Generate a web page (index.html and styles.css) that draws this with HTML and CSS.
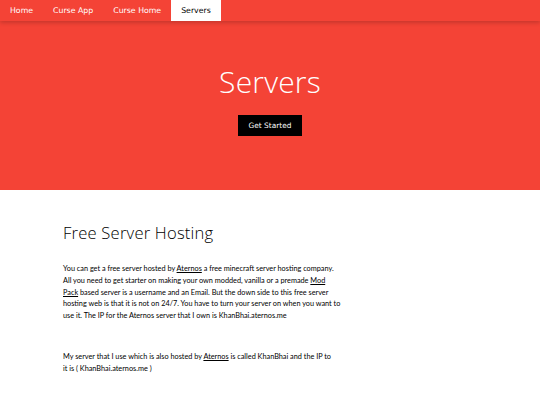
FILE: index.html
```html
<!DOCTYPE html>
<html>
<head>
<meta charset="utf-8">
<link rel="stylesheet" href="styles.css">
</head>
<body>
<div class="nav">
  <a class="nav-item">Home</a>
  <a class="nav-item">Curse App</a>
  <a class="nav-item">Curse Home</a>
  <a class="nav-item active">Servers</a>
</div>
<header class="hero">
  <h1 class="hero-title">Servers</h1>
  <a class="btn">Get Started</a>
</header>
<main class="content">
  <h2 class="section-title">Free Server Hosting</h2>
  <p class="text">You can get a free server hosted by <u>Aternos</u> a free minecraft server hosting company. All you need to get starter on making your own modded, vanilla or a premade <u>Mod Pack</u> based server is a username and an Email. But the down side to this free server hosting web is that it is not on 24/7. You have to turn your server on when you want to use it. The IP for the Aternos server that I own is KhanBhai.aternos.me</p>
  <p class="text second">My server that I use which is also hosted by <u>Aternos</u> is called KhanBhai and the IP to it&nbsp;is ( KhanBhai.aternos.me )</p>
</main>
</body>
</html>
```
FILE: styles.css
```css
html, body { margin: 0; padding: 0; background: #fff; }
body { font-family: Lato, "Open Sans", sans-serif; color: #000; }
.nav {
  position: relative;
  z-index: 2;
  display: flex;
  height: 21px;
  background: #f44336;
  box-shadow: 0 2px 4px rgba(0,0,0,0.18);
}
.nav-item {
  display: flex;
  align-items: center;
  padding: 0 10px;
  font-family: "DejaVu Sans", sans-serif;
  font-size: 7.8px;
  color: #fff;
}
.nav-item.active { background: #fff; color: #000; }
.hero {
  background: #f44336;
  height: 169px;
  display: flex;
  flex-direction: column;
  align-items: center;
  color: #fff;
}
.hero-title {
  margin: 43px 0 0;
  font-family: "Open Sans", sans-serif;
  font-weight: 300;
  font-size: 30px;
  line-height: 36px;
  letter-spacing: 0.2px;
}
.btn {
  margin-top: 15px;
  width: 64px;
  height: 21px;
  background: #000;
  color: #fff;
  font-family: "DejaVu Sans", sans-serif;
  font-size: 7.4px;
  display: flex;
  align-items: center;
  justify-content: center;
}
.content { padding: 33px 0 0 63px; width: 279px; }
.section-title {
  margin: 0;
  font-family: "Open Sans", sans-serif;
  font-weight: 300;
  font-size: 16.6px;
  line-height: 20px;
  letter-spacing: 0.2px;
  color: #000;
}
.text {
  margin: 20px 0 0;
  font-size: 7.3px;
  line-height: 11.75px;
}
.text.second { margin-top: 29px; }
```
